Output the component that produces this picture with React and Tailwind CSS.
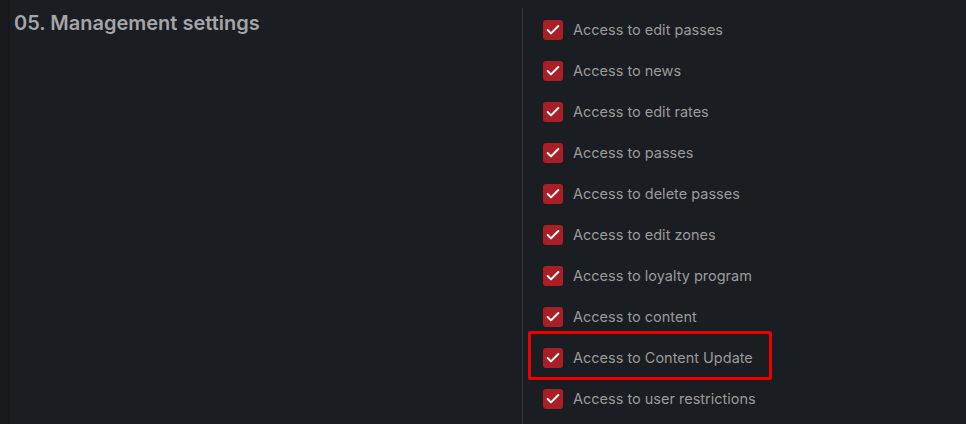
import { Check } from 'lucide-react';

const permissions = [
  { label: 'Access to edit passes' },
  { label: 'Access to news' },
  { label: 'Access to edit rates' },
  { label: 'Access to passes' },
  { label: 'Access to delete passes' },
  { label: 'Access to edit zones' },
  { label: 'Access to loyalty program' },
  { label: 'Access to content' },
  { label: 'Access to Content Update', highlight: true },
  { label: 'Access to user restrictions' },
];

const App = () => {
  return (
    <div
      className="flex h-[424px] w-[966px] overflow-hidden bg-[#1a1d21]"
      style={{ fontFamily: 'Inter, "Noto Sans", sans-serif' }}
    >
      {/* left gutter */}
      <div className="w-[10px] shrink-0 bg-[#16181c]" />

      {/* Section title */}
      <div className="w-[512px] shrink-0 pl-[4px] pt-[9px]">
        <h2 className="text-[20px] font-semibold leading-[28px] text-[#a3a5a8]">
          05. Management settings
        </h2>
      </div>

      {/* Permissions */}
      <div className="mt-[8px] flex-1 border-l border-[#34373c] pl-[20px] pt-[1px]">
        {permissions.map((item) => (
          <div key={item.label} className="relative flex h-[41px] items-center">
            {item.highlight && (
              <span className="pointer-events-none absolute left-[-15px] top-[-6px] h-[49px] w-[244px] rounded-[2px] border-[3px] border-[#ec0000]" />
            )}
            <span className="flex h-[20px] w-[20px] shrink-0 items-center justify-center rounded-[3px] bg-[#a91f25]">
              <Check className="h-[16px] w-[16px] text-white" strokeWidth={3} />
            </span>
            <span className="ml-[10px] text-[14.5px] text-[#9b9b9b]">{item.label}</span>
          </div>
        ))}
      </div>
    </div>
  );
};

export default App;
